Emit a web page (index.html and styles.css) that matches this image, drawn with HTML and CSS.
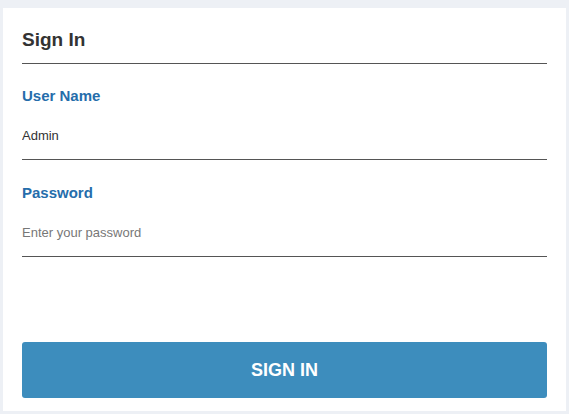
FILE: index.html
```html
<!DOCTYPE html>
<html>
<head>
<meta charset="utf-8">
<link rel="stylesheet" href="styles.css">
</head>
<body>
<div class="card">
  <div class="card-header">Sign In</div>
  <form class="form">
    <div class="field">
      <label class="label" for="user">User Name</label>
      <input class="input" id="user" type="text" value="Admin">
    </div>
    <div class="field">
      <label class="label" for="pass">Password</label>
      <input class="input" id="pass" type="password" placeholder="Enter your password">
    </div>
    <button class="btn" type="button">SIGN IN</button>
  </form>
</div>
</body>
</html>
```
FILE: styles.css
```css
html, body {
  margin: 0;
  padding: 0;
  background: #edf0f5;
  height: 100%;
}
body {
  padding: 8px 3px 3px 3px;
  box-sizing: border-box;
  font-family: "Liberation Sans", Arial, sans-serif;
}
.card {
  background: #ffffff;
  height: 100%;
  padding: 0 19px;
  box-sizing: border-box;
}
.card-header {
  font-size: 19px;
  font-weight: bold;
  color: #333333;
  line-height: 22px;
  padding: 21px 0 12px;
  border-bottom: 1px solid #555555;
}
.form {
  display: flex;
  flex-direction: column;
}
.field {
  display: flex;
  flex-direction: column;
  margin-top: 23px;
}
.field + .field {
  margin-top: 24px;
}
.label {
  font-size: 15px;
  font-weight: bold;
  color: #256dab;
  line-height: 17px;
}
.input {
  font-family: "Liberation Sans", Arial, sans-serif;
  font-size: 13px;
  line-height: 15px;
  color: #333333;
  border: none;
  border-bottom: 1px solid #555555;
  padding: 24px 0 16px;
  margin: 0;
  outline: none;
  background: transparent;
}
.input::placeholder {
  color: #777777;
}
.btn {
  margin-top: 85px;
  height: 56px;
  border: none;
  border-radius: 3px;
  background: #3d8dbd;
  color: #ffffff;
  font-family: "Liberation Sans", Arial, sans-serif;
  font-size: 18px;
  font-weight: bold;
  cursor: pointer;
}
```
